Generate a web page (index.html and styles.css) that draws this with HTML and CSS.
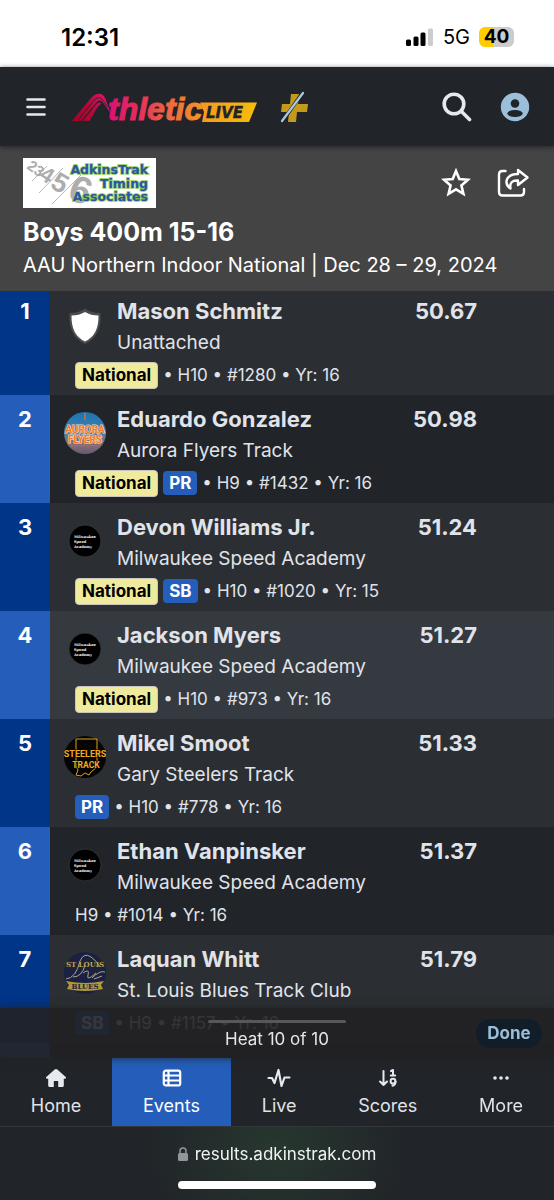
FILE: index.html
```
<!DOCTYPE html>
<html lang="en">
<head>
<meta charset="utf-8">
<meta name="viewport" content="width=device-width, initial-scale=1">
<title>Boys 400m 15-16</title>
<link rel="stylesheet" href="styles.css">
</head>
<body>
<svg class="defs" aria-hidden="true">
  <defs>
    <symbol id="msa" viewBox="0 0 42 42">
      <circle cx="21" cy="21" r="16" fill="#000" stroke="#3c3f42" stroke-width=".7"/>
      <g fill="#fff" font-family="DejaVu Serif, serif" font-weight="700" font-size="3.600">
        <text x="10" y="17.500">Milwaukee</text><text x="10" y="22.500">Speed</text><text x="10" y="27.500">Academy</text>
      </g>
    </symbol>
  </defs>
</svg>

<div class="status">
  <span class="clock">12:31</span>
  <div class="signals">
    <svg width="28" height="19" viewBox="0 0 28 19" aria-hidden="true"><rect x="0" y="11.500" width="5" height="6.500" rx="1.500"/><rect x="7.500" y="8.500" width="5" height="9.500" rx="1.500"/><rect x="14.500" y="4.500" width="5" height="13.500" rx="1.500"/><rect x="22" y="0.500" width="5" height="17.500" rx="1.500" fill="#ccc"/></svg>
    <span class="network">5G</span>
    <span class="battery">40</span>
  </div>
</div>

<nav class="nav">
  <button class="icon-btn" aria-label="Menu"><svg width="20" height="20" viewBox="0 0 20 20" fill="none" stroke="#e6e9ef" stroke-width="2.600" stroke-linecap="round"><path d="M1.500 2.500h17M1.500 10h17M1.500 17.500h17"/></svg></button>
  <a class="brand" href="#" aria-label="AthleticLIVE">
    <svg width="186" height="32" viewBox="72 90 186 32">
      <defs>
        <linearGradient id="word" gradientUnits="userSpaceOnUse" x1="110" x2="201" y1="0" y2="0"><stop offset="0" stop-color="#dd1273"/><stop offset=".3" stop-color="#e52c5c"/><stop offset=".65" stop-color="#ee6840"/><stop offset="1" stop-color="#f39524"/></linearGradient>
        <linearGradient id="tag" x1="0" x2="1"><stop offset="0" stop-color="#f39a22"/><stop offset="1" stop-color="#f5bd09"/></linearGradient>
        <linearGradient id="roof" gradientUnits="userSpaceOnUse" x1="72" x2="110" y1="120" y2="100"><stop offset="0" stop-color="#a50025"/><stop offset=".5" stop-color="#b00a38"/><stop offset="1" stop-color="#e01569"/></linearGradient>
      </defs>
      <path fill="url(#roof)" d="M72 120L91 97Q96 92 101 93Q104 94 105.500 98L110.500 112L103 101.500Q100 97.500 96 102L81 120Z"/>
      <path fill="url(#roof)" d="M82.500 120L96 103.500Q99 100 101.500 102.500Q99 104 97 107L89.500 120Z"/>
      <path d="M77.500 119.500L94 99.500Q98.500 94.500 102.500 98.500L107.500 106" fill="none" stroke="#212429" stroke-width=".8"/>
      <text x="108" y="119" font-family="Liberation Sans, sans-serif" font-size="32" font-weight="700" font-style="italic" fill="url(#word)" stroke="url(#word)" stroke-width="1">thletic</text>
      <path fill="url(#tag)" d="M200 101.500H257L249 121H202L204 111Z"/>
      <text x="206" y="117" font-family="DejaVu Sans, sans-serif" font-size="15" font-weight="700" font-style="italic" fill="#212429" stroke="#212429" stroke-width=".4">LIVE</text>
    </svg>
  </a>
  <a class="plus" href="#" aria-label="Plus">
    <svg width="30" height="34" viewBox="0 0 30 34"><path fill="#c49a1d" d="M12 4h8l-1 10h10l-1 8H18l-1 10H9l1-10H2l1-8h8z"/><path d="M3 32L24 2" stroke="#212429" stroke-width="3.500"/><path d="M3 31L24 3" stroke="#a9cbe0" stroke-width="2.200" stroke-linecap="round"/></svg>
  </a>
  <button class="icon-btn search" aria-label="Search"><svg width="30" height="30" viewBox="0 0 30 30" fill="none" stroke="#e6e9ef" stroke-width="3.600" stroke-linecap="round"><circle cx="12" cy="12" r="9.800"/><path d="M19.500 19.500L27.500 27.500"/></svg></button>
  <button class="icon-btn" aria-label="Account"><svg width="30" height="30" viewBox="0 0 30 30"><circle cx="15" cy="15" r="14.200" fill="#9bbfd9"/><circle cx="15" cy="11.500" r="4.300" fill="#212429"/><ellipse cx="15" cy="21.500" rx="7.700" ry="3.500" fill="#212429"/></svg></button>
</nav>

<header class="event">
  <div class="event-top">
    <svg class="sponsor" width="133" height="50" viewBox="0 0 133 50" role="img" aria-label="AdkinsTrak Timing Associates">
      <rect width="133" height="50" fill="#fff"/>
      <g fill="#adadad" font-family="Liberation Sans, sans-serif" font-weight="700">
        <text transform="translate(3 10) rotate(35)" font-size="15">23</text>
        <text transform="translate(15 20) rotate(32)" font-size="22">4</text>
        <text transform="translate(26 29) rotate(30)" font-size="27">5</text>
        <text transform="translate(43 40) rotate(22)" font-size="38">6</text>
      </g>
      <path d="M9 23L24 8M16 35L40 10M29 46L58 17" stroke="#999" stroke-width=".7"/>
      <g fill="#2f55a0" stroke="#8ccf5e" stroke-width="1.600" paint-order="stroke" font-family="DejaVu Sans, sans-serif" font-weight="700" font-size="12.500" text-anchor="end">
        <text x="125" y="16">AdkinsTrak</text><text x="125" y="30">Timing</text><text x="125" y="43">Associates</text>
      </g>
    </svg>
    <div class="event-actions">
      <button class="icon-btn" aria-label="Favorite"><svg width="30" height="30" viewBox="0 0 30 30" fill="none" stroke="#fff" stroke-width="2.600"><path d="M15 3L18.300 11L27 11.700L20.400 17.400L22.400 25.800L15 21.300L7.600 25.800L9.600 17.400L3 11.700L11.700 11Z"/></svg></button>
      <button class="icon-btn" aria-label="Share"><svg width="32" height="30" viewBox="0 0 32 30" fill="none" stroke="#fff" stroke-width="2.400" stroke-linejoin="round" stroke-linecap="round"><path d="M8.500 3H5.500Q2 3 2 6.500V24Q2 27.500 5.500 27.500H23.500Q27 27.500 27 24V21"/><path d="M21 2L30.500 9.500L21 17V12.500Q12 12 13.500 20.500Q9 17.500 9.500 13Q11 6 21 6Z"/></svg></button>
    </div>
  </div>
  <h1>Boys 400m 15-16</h1>
  <p>AAU Northern Indoor National | Dec 28 – 29, 2024</p>
</header>

<ol class="results">
  <li class="row">
    <span class="rank">1</span>
    <div class="entry">
      <div class="main">
        <svg class="crest" viewBox="0 0 42 42" aria-hidden="true"><path d="M21 4.500Q27 9 36.500 9Q38 32 21 40Q4 32 5.500 9Q15 9 21 4.500Z" fill="#4a4c4f"/><path d="M21 8Q27 11.500 34.500 11.500Q35 31 21 37.500Q7 31 7.500 11.500Q15 11.500 21 8Z" fill="#fff"/></svg>
        <div class="who"><strong>Mason Schmitz</strong><span>Unattached</span></div>
        <span class="time">50.67</span>
      </div>
      <div class="meta"><b class="tag national">National</b><span>• H10 • #1280 • Yr: 16</span></div>
    </div>
  </li>
  <li class="row">
    <span class="rank">2</span>
    <div class="entry">
      <div class="main">
        <svg class="crest" viewBox="0 0 42 42" aria-hidden="true">
          <defs><linearGradient id="sky" x2="0" y2="1"><stop offset="0" stop-color="#1676b8"/><stop offset=".5" stop-color="#4c7ea4"/><stop offset=".8" stop-color="#8a6a72"/><stop offset="1" stop-color="#5c5d74"/></linearGradient></defs>
          <circle cx="21" cy="21" r="21" fill="url(#sky)"/><path d="M20 1h2v7h-2zM7 33h28v1H7z" fill="#b5693f"/>
          <g fill="#f07a2b" stroke="#f6dcc4" stroke-width="1.200" paint-order="stroke" font-family="Liberation Sans Narrow, Roboto, sans-serif" font-weight="700" text-anchor="middle"><text x="21" y="20.500" font-size="10">AURORA</text><text x="21" y="31" font-size="10">FLYERS</text></g>
        </svg>
        <div class="who"><strong>Eduardo Gonzalez</strong><span>Aurora Flyers Track</span></div>
        <span class="time">50.98</span>
      </div>
      <div class="meta"><b class="tag national">National</b><b class="tag">PR</b><span>• H9 • #1432 • Yr: 16</span></div>
    </div>
  </li>
  <li class="row">
    <span class="rank">3</span>
    <div class="entry">
      <div class="main">
        <svg class="crest" aria-hidden="true"><use href="#msa"/></svg>
        <div class="who"><strong>Devon Williams Jr.</strong><span>Milwaukee Speed Academy</span></div>
        <span class="time">51.24</span>
      </div>
      <div class="meta"><b class="tag national">National</b><b class="tag">SB</b><span>• H10 • #1020 • Yr: 15</span></div>
    </div>
  </li>
  <li class="row highlight">
    <span class="rank">4</span>
    <div class="entry">
      <div class="main">
        <svg class="crest" aria-hidden="true"><use href="#msa"/></svg>
        <div class="who"><strong>Jackson Myers</strong><span>Milwaukee Speed Academy</span></div>
        <span class="time">51.27</span>
      </div>
      <div class="meta"><b class="tag national">National</b><span>• H10 • #973 • Yr: 16</span></div>
    </div>
  </li>
  <li class="row">
    <span class="rank">5</span>
    <div class="entry">
      <div class="main">
        <svg class="crest" viewBox="0 0 42 42" aria-hidden="true">
          <circle cx="21" cy="21" r="21" fill="#050505"/><path d="M12 12V3H33V31L27 36L25 39L21 37L17 40L12 39L14 34L12 30Z" fill="none" stroke="#e0a01c" stroke-width="1"/>
          <g fill="#f2aa1d" stroke="#050505" stroke-width="1.200" paint-order="stroke" font-family="Liberation Sans Narrow, Roboto, sans-serif" font-weight="700" text-anchor="middle"><text x="21" y="21" font-size="9">STEELERS</text><text x="22" y="32" font-size="8.500">TRACK</text></g>
        </svg>
        <div class="who"><strong>Mikel Smoot</strong><span>Gary Steelers Track</span></div>
        <span class="time">51.33</span>
      </div>
      <div class="meta"><b class="tag">PR</b><span>• H10 • #778 • Yr: 16</span></div>
    </div>
  </li>
  <li class="row">
    <span class="rank">6</span>
    <div class="entry">
      <div class="main">
        <svg class="crest" aria-hidden="true"><use href="#msa"/></svg>
        <div class="who"><strong>Ethan Vanpinsker</strong><span>Milwaukee Speed Academy</span></div>
        <span class="time">51.37</span>
      </div>
      <div class="meta"><span>H9 • #1014 • Yr: 16</span></div>
    </div>
  </li>
  <li class="row">
    <span class="rank">7</span>
    <div class="entry">
      <div class="main">
        <svg class="crest" viewBox="0 0 42 42" aria-hidden="true">
          <circle cx="21" cy="21" r="21" fill="#1c2141"/>
          <path d="M2 27Q12 26 16 9Q20 0 27 5Q33 9 36 15M9 25Q18 25 21 13M19 21Q26 16 24 23T32 21M28 26Q36 18 41 20M30 27l8-3" fill="none" stroke="#a9a686" stroke-width="1"/>
          <path d="M2 29Q21 33 40 29L37 33L39 37Q21 41 3 37L5 33Z" fill="#b09a38"/>
          <g font-family="DejaVu Serif, serif" font-weight="700" text-anchor="middle"><text x="21" y="15" font-size="7" fill="#bda63e">ST LOUIS</text><text x="21" y="37" font-size="7" fill="#1c2141">BLUES</text></g>
        </svg>
        <div class="who"><strong>Laquan Whitt</strong><span>St. Louis Blues Track Club</span></div>
        <span class="time">51.79</span>
      </div>
      <div class="meta"><b class="tag">SB</b><span>• H9 • #1157 • Yr: 16</span></div>
    </div>
  </li>
  <li class="row" aria-hidden="true"><span class="rank"></span><div class="entry"></div></li>
</ol>

<footer class="dock">
  <div class="heat">
    <span class="grabber"></span>
    <span class="heat-label">Heat 10 of 10</span>
    <button class="done">Done</button>
  </div>
  <div class="tabs">
    <a class="tab" href="#"><svg width="22" height="20" viewBox="0 0 22 20" fill="#e6e9ef"><path d="M11 1Q11.700 1 12.300 1.500L21 9.300Q21.500 10.700 20 10.800H18.800V17.500Q18.800 19 17.300 19H13.200V13H8.800V19H4.700Q3.200 19 3.200 17.500V10.800H2Q.5 10.700 1 9.300L9.700 1.500Q10.300 1 11 1Z"/></svg>Home</a>
    <a class="tab active" href="#" aria-current="page"><svg width="22" height="20" viewBox="0 0 22 20" fill="none" stroke="#fff" stroke-width="2.200"><rect x="2.800" y="2.600" width="16.400" height="14.800" rx="2"/><path d="M3 7.500H19M3 12.500H19M7.500 3V17"/></svg>Events</a>
    <a class="tab" href="#"><svg width="24" height="20" viewBox="0 0 24 20" fill="none" stroke="#e6e9ef" stroke-width="2.200" stroke-linejoin="round" stroke-linecap="round"><path d="M1.500 10H5L7.500 15L11.500 2L14.500 18L17.500 9.500H22.500"/></svg>Live</a>
    <a class="tab" href="#"><svg width="22" height="20" viewBox="0 0 22 20" fill="none" stroke="#e6e9ef" stroke-width="2" stroke-linejoin="round" stroke-linecap="round"><path d="M6.500 3V17M3 13.500L6.500 17L10 13.500M14 3L16 2V7.500M13.800 7.500H18.200M15.500 17.800Q18.500 17 18.500 13.500"/><circle cx="16" cy="13.200" r="2.400"/></svg>Scores</a>
    <a class="tab" href="#"><svg width="22" height="20" viewBox="0 0 22 20" fill="#e6e9ef"><circle cx="5" cy="10" r="1.800"/><circle cx="11" cy="10" r="1.800"/><circle cx="17" cy="10" r="1.800"/></svg>More</a>
  </div>
  <div class="browser">
    <span class="url"><svg width="10" height="14" viewBox="0 0 10 14"><rect y="6" width="10" height="8" rx="1.500" fill="#92969a"/><path d="M2 7V4Q2 1 5 1T8 4V7" fill="none" stroke="#92969a" stroke-width="1.500"/></svg>results.adkinstrak.com</span>
    <span class="home-bar"></span>
  </div>
</footer>
</body>
</html>
```
FILE: styles.css
```
* { box-sizing: border-box; }
body {
  margin: 0;
  min-height: 100vh;
  background: #212429;
  color: #e0e3ea;
  font-family: Inter, "Liberation Sans", sans-serif;
}
button { font: inherit; border: 0; background: none; padding: 0; }
a { color: inherit; text-decoration: none; }
svg { display: block; flex: none; }
.defs { position: absolute; width: 0; height: 0; }
.icon-btn { display: block; }

.status {
  display: flex;
  align-items: center;
  justify-content: space-between;
  padding: 17px 40px 10px 61px;
  height: 67px;
  background: #fff;
  color: #000;
}
.clock { font-size: 24px; font-weight: 600; }
.signals { display: flex; align-items: center; gap: 9px; }
.network { font-size: 20px; }
.battery {
  width: 35px;
  border-radius: 6px;
  background: linear-gradient(90deg, #fc0 40%, #ccc 40%);
  font-size: 19px;
  font-weight: 700;
  line-height: 20px;
  text-align: center;
}

.nav {
  position: relative;
  display: flex;
  align-items: center;
  height: 79px;
  padding: 0 24px 0 26px;
  background: #212429;
  box-shadow: 0 1px 5px rgba(20, 22, 30, .7);
}
.brand { margin-left: 26px; }
.plus { margin-left: 21px; }
.search { margin-left: auto; margin-right: 28px; }

.event { padding: 12px 25px 10px 23px; background: #444; color: #fff; }
.event-top { display: flex; justify-content: space-between; align-items: center; }
.event-actions { display: flex; gap: 26px; }
.event h1 { margin: 7px 0 0; font-size: 25px; line-height: 34px; font-weight: 700; }
.event p { margin: 0; font-size: 20px; line-height: 32px; }

.results { margin: 0; padding: 0; list-style: none; }
.row { display: flex; background: #212429; }
.row:nth-child(odd) { background: #2b2f33; }
.row.highlight { background: #343a40; }
.rank {
  flex: none;
  width: 50px;
  padding-top: 9px;
  background: #245eba;
  color: #fff;
  font-size: 22px;
  font-weight: 700;
  line-height: 30px;
  text-align: center;
}
.row:nth-child(odd) .rank { background: #003588; }
.entry { flex: 1; min-width: 0; min-height: 68px; padding: 9px 77px 5px 14px; }
.row:first-child .rank,
.row:first-child .entry { padding-top: 5px; }
.main { display: flex; gap: 11px; }
.crest { width: 42px; height: 42px; margin-top: 8px; }
.who { flex: 1; }
.who strong, .who span { display: block; }
.who strong, .time { font-size: 22px; font-weight: 700; line-height: 30px; }
.who span { font-size: 19px; line-height: 34px; }
.meta { display: flex; align-items: center; gap: 5px; padding-left: 11px; height: 30px; font-size: 17px; }
.tag {
  padding: 0 6px;
  border-radius: 4px;
  background: #245eba;
  color: #fff;
  font-weight: 700;
  line-height: 24px;
}
.national { border: 1px solid #c9c6c0; background: #f0eb9c; color: #000; line-height: 25px; }

.dock { position: fixed; right: 0; bottom: 0; left: 0; }
.heat {
  position: relative;
  display: flex;
  flex-direction: column;
  align-items: center;
  gap: 5px;
  height: 50px;
  padding-top: 12px;
  background: rgba(33, 33, 35, .9);
  box-shadow: 0 0 8px rgba(33, 33, 35, .9);
  color: #e6e6e6;
}
.grabber { width: 138px; height: 3px; border-radius: 2px; background: #58585a; }
.heat-label { font-size: 17px; line-height: 22px; }
.done {
  position: absolute;
  top: 11px;
  right: 12px;
  width: 66px;
  border-radius: 15px;
  background: #111d28;
  color: #9bbfd9;
  font-size: 17px;
  font-weight: 700;
  line-height: 29px;
}
.tabs { display: flex; height: 68px; background: #212429; }
.tab {
  flex: auto;
  display: flex;
  flex-direction: column;
  align-items: center;
  gap: 6px;
  padding-top: 10px;
  font-size: 18px;
  line-height: 24px;
}
.tab.active { background: #245eba; color: #fff; }
.browser {
  display: flex;
  flex-direction: column;
  align-items: center;
  gap: 15px;
  height: 74px;
  padding-top: 15px;
  border-top: 1px solid #33373b;
  background: radial-gradient(ellipse 130px 100px at 50% 30%, #27372f, #212529);
  color: #f0f2f4;
}
.url { display: flex; align-items: center; gap: 7px; font-size: 17px; line-height: 24px; }
.home-bar { width: 198px; height: 8px; border-radius: 4px; background: #fff; }
```
